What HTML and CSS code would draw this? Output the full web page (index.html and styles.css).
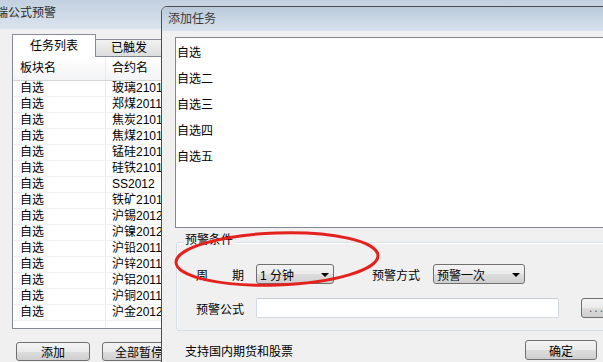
FILE: index.html
```html
<!DOCTYPE html>
<html lang="zh-CN">
<head>
    <meta charset="UTF-8">
    <title>公式预警</title>
    <link rel="stylesheet" href="styles.css">
</head>
<body>
    <div class="win">
        <div class="win-title">端公式预警</div>
        <div class="win-body">
            <div class="tabs">
                <div class="tab active">任务列表</div>
                <div class="tab">已触发</div>
            </div>
            <div class="grid">
                <div class="grid-head">
                    <span class="col1">板块名</span>
                    <span class="col2">合约名</span>
                </div>
                <div class="grid-row"><span class="col1">自选</span><span class="col2">玻璃2101</span></div>
                <div class="grid-row"><span class="col1">自选</span><span class="col2">郑煤2011</span></div>
                <div class="grid-row"><span class="col1">自选</span><span class="col2">焦炭2101</span></div>
                <div class="grid-row"><span class="col1">自选</span><span class="col2">焦煤2101</span></div>
                <div class="grid-row"><span class="col1">自选</span><span class="col2">锰硅2101</span></div>
                <div class="grid-row"><span class="col1">自选</span><span class="col2">硅铁2101</span></div>
                <div class="grid-row"><span class="col1">自选</span><span class="col2">SS2012</span></div>
                <div class="grid-row"><span class="col1">自选</span><span class="col2">铁矿2101</span></div>
                <div class="grid-row"><span class="col1">自选</span><span class="col2">沪锡2012</span></div>
                <div class="grid-row"><span class="col1">自选</span><span class="col2">沪镍2012</span></div>
                <div class="grid-row"><span class="col1">自选</span><span class="col2">沪铅2011</span></div>
                <div class="grid-row"><span class="col1">自选</span><span class="col2">沪锌2011</span></div>
                <div class="grid-row"><span class="col1">自选</span><span class="col2">沪铝2011</span></div>
                <div class="grid-row"><span class="col1">自选</span><span class="col2">沪铜2011</span></div>
                <div class="grid-row"><span class="col1">自选</span><span class="col2">沪金2012</span></div>
                <div class="grid-row filler"><span class="col1"></span><span class="col2"></span></div>
            </div>
            <div class="actions">
                <button class="btn add-btn">添加</button>
                <button class="btn pause-btn">全部暂停</button>
            </div>
        </div>
    </div>

    <div class="dialog">
        <div class="dialog-title">添加任务</div>
        <div class="dialog-body">
            <div class="listbox">
                <div class="list-item">自选</div>
                <div class="list-item">自选二</div>
                <div class="list-item">自选三</div>
                <div class="list-item">自选四</div>
                <div class="list-item">自选五</div>
            </div>

            <div class="group">
                <div class="group-title">预警条件</div>
                <div class="form-row first">
                    <span class="label spread"><span>周</span><span>期</span></span>
                    <div class="combo period"><span>1 分钟</span><i class="arrow"></i></div>
                    <span class="label mode-label">预警方式</span>
                    <div class="combo mode"><span>预警一次</span><i class="arrow"></i></div>
                </div>
                <div class="form-row">
                    <span class="label">预警公式</span>
                    <input type="text" class="formula">
                    <button class="btn more-btn">...</button>
                </div>
            </div>

            <div class="footer">
                <span>支持国内期货和股票</span>
                <button class="btn ok-btn">确定</button>
            </div>
        </div>
    </div>

    <svg class="mark" width="603" height="362" viewBox="0 0 603 362">
        <ellipse cx="277" cy="259" rx="101" ry="26" transform="rotate(-2 277 259)" fill="none" stroke="#e5211d" stroke-width="3"/>
    </svg>
</body>
</html>
```

FILE: styles.css
```css
body {
    margin: 0;
    width: 603px;
    height: 362px;
    overflow: hidden;
    position: relative;
    font-family: "Liberation Sans", "Noto Sans CJK SC", sans-serif;
    font-size: 12px;
    color: #000;
    background-color: #f0f0f0;
}

/* background window */
.win-title {
    height: 29px;
    line-height: 27px;
    margin-left: -4px;
    color: #2a2a2a;
    background: linear-gradient(#c3d0df, #dae4ef);
}

.win-body {
    padding: 6px 0 0 12px;
}

.tabs {
    display: flex;
    align-items: flex-end;
    height: 21px;
}

.tab {
    height: 16px;
    line-height: 16px;
    width: 66px;
    text-align: center;
    border: 1px solid #898c95;
    border-bottom: none;
    border-left: none;
    background: linear-gradient(#f2f2f2, #dcdcdc);
}

.tab.active {
    position: relative;
    z-index: 1;
    height: 22px;
    line-height: 22px;
    width: 82px;
    margin-bottom: -1px;
    border-left: 1px solid #898c95;
    background: #fff;
}

.grid {
    display: flex;
    flex-direction: column;
    width: 300px;
    height: 271px;
    border: 1px solid #828790;
    background: #fff;
}

.grid-head,
.grid-row {
    display: flex;
}

.grid-head {
    height: 23px;
    line-height: 23px;
    border-bottom: 1px solid #d5d5d5;
    background: linear-gradient(#fff, #f3f4f6);
}

.grid-row {
    height: 15px;
    line-height: 15px;
    border-bottom: 1px solid #f0f0f0;
}

.grid-row.filler {
    flex: 1;
    border-bottom: none;
}

.col1 {
    width: 85px;
    padding-left: 7px;
    border-right: 1px solid #ececec;
}

.col2 {
    padding-left: 6px;
    width: 100px;
    border-right: 1px solid #ececec;
}

.actions {
    display: flex;
    gap: 12px;
    margin-top: 13px;
    padding-left: 4px;
}

.btn {
    font-family: inherit;
    font-size: 12px;
    height: 19px;
    padding: 0;
    border: 1px solid #707070;
    border-radius: 3px;
    background: linear-gradient(#f3f3f3 0%, #ebebeb 50%, #dddddd 51%, #cfcfcf 100%);
    color: #000;
}

.add-btn,
.pause-btn {
    width: 74px;
}

/* dialog */
.dialog {
    position: absolute;
    left: 161px;
    top: 6px;
    width: 500px;
    height: 380px;
    border: 1px solid #4d4d4d;
    border-radius: 6px 6px 0 0;
    background: #f0f0f0;
}

.dialog-title {
    height: 24px;
    line-height: 25px;
    padding-left: 6px;
    color: #3a3a3a;
    border-radius: 5px 5px 0 0;
    background: linear-gradient(#b9c9d9, #d8e3ef);
}

.dialog-body {
    padding: 6px 0 0 13px;
}

.listbox {
    width: 470px;
    height: 187px;
    padding-top: 2px;
    border: 1px solid #828790;
    background: #fff;
}

.list-item {
    height: 26px;
    line-height: 26px;
    padding-left: 1px;
}

.group {
    margin: 14px 0 0 1px;
    width: 470px;
    padding: 0 0 12px 19px;
    border: 1px solid #d5dfe5;
    border-radius: 3px;
    box-shadow: inset 1px 1px 0 #fff;
}

.group-title {
    width: fit-content;
    margin: -10px 0 0 -13px;
    padding: 0 2px;
    line-height: 14px;
    background: #f0f0f0;
}

.form-row {
    display: flex;
    align-items: center;
    height: 20px;
    margin-top: 14px;
}

.form-row.first {
    margin-top: 17px;
}

.label {
    width: 48px;
    margin-right: 12px;
}

.spread {
    display: flex;
    justify-content: space-between;
}

.mode-label {
    margin-left: 38px;
    margin-right: 13px;
}

.combo {
    display: flex;
    align-items: center;
    justify-content: space-between;
    box-sizing: border-box;
    height: 20px;
    padding: 0 4px 0 3px;
    border: 1px solid #707070;
    border-radius: 3px;
    background: linear-gradient(#f3f3f3 0%, #ebebeb 50%, #dddddd 51%, #cfcfcf 100%);
}

.period {
    width: 78px;
}

.mode {
    width: 92px;
}

.arrow {
    width: 0;
    height: 0;
    border-left: 4px solid transparent;
    border-right: 4px solid transparent;
    border-top: 4px solid #000;
    margin-top: 1px;
}

.formula {
    box-sizing: border-box;
    width: 303px;
    height: 20px;
    margin: 0;
    border: 1px solid #d3d9e0;
    border-top-color: #c5ccd4;
    border-radius: 2px;
    background: #fff;
}

.more-btn {
    width: 32px;
    height: 20px;
    margin-left: 22px;
    line-height: 14px;
    letter-spacing: 2px;
    color: #555;
}

.footer {
    display: flex;
    align-items: center;
    justify-content: space-between;
    width: 412px;
    margin-top: 9px;
    padding-left: 10px;
}

.ok-btn {
    width: 72px;
    height: 20px;
}

.mark {
    position: absolute;
    left: 0;
    top: 0;
    pointer-events: none;
}
```
